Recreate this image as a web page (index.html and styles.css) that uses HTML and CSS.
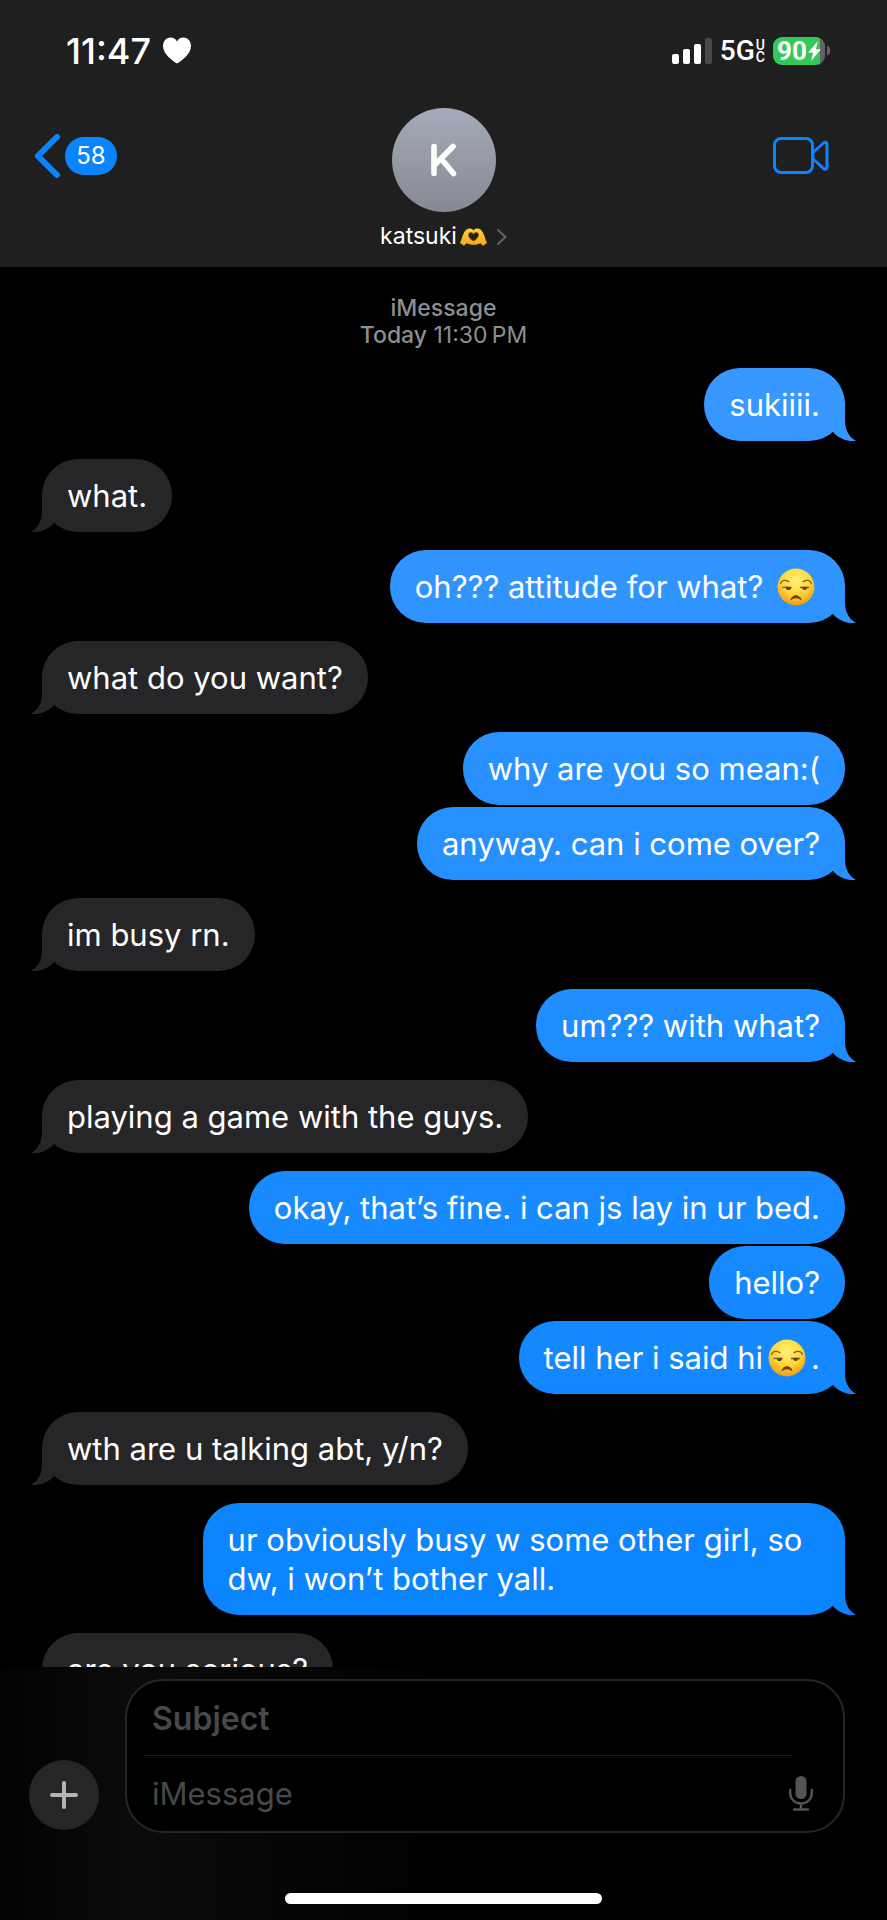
FILE: index.html
```html
<!DOCTYPE html>
<html lang="en">
<head>
<meta charset="utf-8">
<meta name="viewport" content="width=device-width, initial-scale=1">
<title>Messages</title>
<link rel="stylesheet" href="styles.css">
</head>
<body>
<svg class="defs" aria-hidden="true">
  <defs>
    <radialGradient id="face-fill" cx="0.5" cy="0.32" r="0.68">
      <stop offset="0" stop-color="#fff27a"/>
      <stop offset="0.55" stop-color="#ffd83c"/>
      <stop offset="1" stop-color="#f09a14"/>
    </radialGradient>
    <linearGradient id="hand-fill" x1="0" y1="0" x2="0" y2="1">
      <stop offset="0" stop-color="#ffd23c"/>
      <stop offset="1" stop-color="#f5a818"/>
    </linearGradient>
    <symbol id="unamused" viewBox="0 0 38 38">
      <circle cx="19" cy="19" r="18.5" fill="url(#face-fill)"/>
      <g fill="none" stroke="#8a5a14" stroke-width="1.3" stroke-linecap="round">
        <path d="M3.500 15.500c1.500-3.500 5-4 8.500-1.800"/>
        <path d="M26 13.700c3.500-2.200 7-1.700 8.500 1.800"/>
        <path d="M6 19.500c2.500-.6 5-.6 8 0"/>
        <path d="M23.500 19.500c2.500-.6 5-.6 8 0"/>
      </g>
      <path d="M8.500 19.200h5.500c.2 3.600-4.500 4-5.500 0z" fill="#5f380c"/>
      <path d="M25 19.200h5.500c-.5 3.800-5.500 3.600-5.500 0z" fill="#5f380c"/>
      <path d="M14 31.500c1.500-5 8.500-5 10 0-3-2.200-7-2.200-10 0z" fill="#6b3d0a" stroke="#6b3d0a" stroke-linejoin="round"/>
    </symbol>
  </defs>
</svg>

<header class="top">
  <div class="status">
    <div class="status-left">
      <time class="clock">11:47</time>
      <svg class="heart" viewBox="0 0 28 27" aria-label="Focus on" role="img"><path d="M14 26.500C10 24 0 17.500 0 9 0 4 3.500.5 7.500.5c3 0 5.200 1.500 6.500 3.900C15.300 2 17.500.5 20.500.5c4 0 7.500 3.500 7.500 8.500 0 8.500-10 15-14 17.500z" fill="#fff"/></svg>
    </div>
    <div class="status-right">
      <svg class="signal" viewBox="0 0 40 26" aria-label="Signal" role="img">
        <rect x="0" y="16" width="7" height="10" rx="2" fill="#fff"/>
        <rect x="11" y="11" width="7" height="15" rx="2" fill="#fff"/>
        <rect x="22" y="6" width="7" height="20" rx="2" fill="#fff"/>
        <rect x="33" y="0" width="7" height="26" rx="2" fill="#4a4a4a"/>
      </svg>
      <span class="network">5G<span class="network-sub"><span>U</span><span>C</span></span></span>
      <span class="battery">
        <span class="battery-body">90<svg class="bolt" viewBox="0 0 12 20"><path d="M9.500 0 .3 10.800c-.3.400-.2.900.4.900h4L2.500 20l9.200-10.800c.4-.5.200-.9-.4-.9h-4z" fill="#fff"/></svg></span>
        <span class="battery-tip"></span>
      </span>
    </div>
  </div>
  <nav class="bar">
    <button class="back" aria-label="Back, 58 unread">
      <svg class="back-icon" viewBox="0 0 26 44"><path d="M22 3 3 22l19 19" fill="none" stroke="#0a84ff" stroke-width="6" stroke-linecap="round" stroke-linejoin="miter"/></svg>
      <span class="count">58</span>
    </button>
    <button class="contact">
      <span class="avatar"><svg class="initial" viewBox="0 0 26 34" aria-label="K" role="img"><path d="M3 3.500v27M22 3.500 3 22.500M10 15.500l12.500 15" fill="none" stroke="#fff" stroke-width="5.600" stroke-linecap="round"/></svg></span>
      <span class="name">katsuki
        <svg class="hands" viewBox="0 0 27 18" aria-label="heart hands" role="img"><path d="M0 15C2.500 9.500 3 4.500 6.500 1.500 8.500 0 12 0 13.500 2.500 15 0 18.500 0 20.500 1.500c3.500 3 4 8 6.500 13.500l-4 2.800-2.600-2.600c-2 .6-4 1.600-6.900 1.600s-4.900-1-6.900-1.600L4 17.800z" fill="url(#hand-fill)"/><path d="M13.500 13C11 11.500 8.500 10 8.500 6.700c0-2.700 3.800-3.200 5-.4 1.200-2.800 5-2.300 5 .4 0 3.300-2.500 4.800-5 6.300z" fill="#1f1f1f" stroke="#9a5c08" stroke-width="1"/></svg>
        <svg class="disclosure" viewBox="0 0 10 16"><path d="m1 1 7.500 7L1 15" fill="none" stroke="#636366" stroke-width="2" stroke-linecap="round"/></svg>
      </span>
    </button>
    <button class="video" aria-label="FaceTime">
      <svg class="video-icon" viewBox="0 0 56 38"><g fill="none" stroke="#0a84ff" stroke-width="3" stroke-linejoin="round"><rect x="1.500" y="1.500" width="38" height="34" rx="6.500"/><path d="M40 15.500 50.500 6c1.700-1.500 3.500-.8 3.500 1.200v23c0 2-1.800 2.700-3.500 1.200L40 22z"/></g></svg>
    </button>
  </nav>
</header>

<main class="thread">
  <p class="stamp"><strong>iMessage</strong><br><strong>Today</strong> 11:30&#8201;PM</p>
  <p class="msg sent tail">sukiiii.</p>
  <p class="msg got tail">what.</p>
  <p class="msg sent tail">oh??? attitude for what? <svg class="emoji" role="img" aria-label="unamused face"><use href="#unamused"/></svg></p>
  <p class="msg got tail">what do you want?</p>
  <p class="msg sent">why are you so mean:(</p>
  <p class="msg sent tail">anyway. can i come over?</p>
  <p class="msg got tail">im busy rn.</p>
  <p class="msg sent tail">um??? with what?</p>
  <p class="msg got tail">playing a game with the guys.</p>
  <p class="msg sent">okay, that’s fine. i can js lay in ur bed.</p>
  <p class="msg sent">hello?</p>
  <p class="msg sent tail">tell her i said hi<svg class="emoji" role="img" aria-label="unamused face"><use href="#unamused"/></svg>.</p>
  <p class="msg got tail">wth are u talking abt, y/n?</p>
  <p class="msg sent tail">ur obviously busy w some other girl, so dw, i won’t bother yall.</p>
  <p class="msg got tail">are you serious?</p>
</main>

<footer class="composer">
  <div class="compose-row">
    <button class="add" aria-label="Add attachment"><svg class="add-icon" viewBox="0 0 28 28"><path d="M14 2v24M2 14h24" stroke="#b4b4b6" stroke-width="4" stroke-linecap="round"/></svg></button>
    <div class="field">
      <input class="subject" type="text" placeholder="Subject" aria-label="Subject">
      <div class="body-row">
        <input class="body" type="text" placeholder="iMessage" aria-label="iMessage">
        <button class="mic" aria-label="Dictate"><svg class="mic-icon" viewBox="0 0 24 35"><rect x="6.500" y="0" width="11" height="23" rx="5.500" fill="#545456"/><path d="M1.200 14v3c0 6 4.500 10.500 10.800 10.500S22.800 23 22.800 17v-3M12 28v5M5 33.500h14" fill="none" stroke="#545456" stroke-width="2.400" stroke-linecap="round"/></svg></button>
      </div>
    </div>
  </div>
  <div class="home"></div>
</footer>
</body>
</html>
```

FILE: styles.css
```css
* { box-sizing: border-box; }

body {
  margin: 0;
  height: 100vh;
  display: flex;
  flex-direction: column;
  background: #000;
  color: #fff;
  font-family: Inter, "Liberation Sans", sans-serif;
}

button, input {
  font: inherit;
  color: inherit;
  background: none;
  border: 0;
  padding: 0;
}

svg { display: block; flex: none; }
.defs { position: absolute; width: 0; height: 0; }

/* Header */
.top { background: #1f1f1f; height: 267px; flex: none; }

.status {
  display: flex;
  justify-content: space-between;
  align-items: center;
  height: 101px;
  padding: 0 57px 0 66px;
}
.status-left, .status-right, .battery, .network { display: flex; align-items: center; }
.status-left { gap: 12px; }
.clock { font-size: 36px; font-weight: 500; }
.heart { width: 28px; height: 27px; }
.status-right { gap: 8px; }
.signal { width: 40px; height: 26px; }
.network { font-family: Roboto, sans-serif; font-size: 28px; font-weight: 500; gap: 1px; }
.network-sub { display: flex; flex-direction: column; font-size: 14px; line-height: 12px; font-weight: 500; }
.battery { gap: 2px; }
.battery-body {
  display: flex;
  align-items: center;
  gap: 1px;
  width: 52px;
  height: 28px;
  padding-left: 4px;
  border-radius: 9px;
  background: linear-gradient(90deg, #34c759 47px, #636366 47px);
  font: 700 26px Roboto, sans-serif;
}
.bolt { width: 13px; height: 20px; }
.battery-tip { width: 3px; height: 9px; border-radius: 0 3px 3px 0; background: #636366; }

.bar {
  display: grid;
  grid-template-columns: 1fr auto 1fr;
  align-items: start;
  padding: 7px 58px 0 35px;
}
.back { display: flex; align-items: center; gap: 4px; justify-self: start; margin-top: 26px; }
.back-icon { width: 26px; height: 44px; }
.count {
  width: 52px;
  line-height: 38px;
  border-radius: 19px;
  background: #0a84ff;
  font-size: 24px;
  text-align: center;
}
.contact { display: flex; flex-direction: column; align-items: center; gap: 11px; margin-left: 23px; }
.avatar {
  display: grid;
  place-items: center;
  width: 104px;
  height: 104px;
  border-radius: 50%;
  background: linear-gradient(#a5abb9, #858992);
}
.initial { width: 26px; height: 34px; }
.name { display: flex; align-items: center; font-size: 23px; line-height: 27px; }
.hands { width: 27px; height: 18px; margin-left: 3px; }
.disclosure { width: 10px; height: 16px; margin-left: 10px; }
.video { justify-self: end; margin-top: 29px; }
.video-icon { width: 56px; height: 38px; }

/* Thread */
.thread {
  flex: 1;
  min-height: 0;
  overflow: hidden;
  display: flex;
  flex-direction: column;
  padding: 28px 42px 0;
}
.stamp {
  margin: 0 0 19px;
  color: #8e8e93;
  font-size: 23px;
  line-height: 27px;
  text-align: center;
}
.stamp strong { font-weight: 500; }

.msg {
  position: relative;
  flex: none;
  max-width: 80%;
  margin: 0 0 2px;
  padding: 17px 25px;
  border-radius: 36px;
  font-size: 31px;
  line-height: 39px;
}
.sent {
  align-self: flex-end;
  background: linear-gradient(#3b99ff 300px, #0a84ff 1600px) fixed;
}
.got { align-self: flex-start; background: #262628; }
.tail { margin-bottom: 18px; }
.tail::after {
  content: "";
  position: absolute;
  bottom: 0;
  width: 40px;
  height: 40px;
  background: inherit;
}
.sent.tail::after {
  right: -11px;
  clip-path: path("M29 0V19C29 29 33 36 40 40C31 41 22 37 17 31L8 20Z");
}
.got.tail::after {
  left: -11px;
  clip-path: path("M11 0V19C11 29 7 36 0 40C9 41 18 37 23 31L32 20Z");
}
.emoji { display: inline-block; width: 38px; height: 38px; margin: 0 5px; vertical-align: -8px; }

/* Composer */
.composer {
  flex: none;
  padding: 12px 0 16px;
  background: linear-gradient(90deg, #020202, #0b0b0b 15%, #060606 30%, #000 52%);
}
.compose-row { display: flex; align-items: flex-end; gap: 26px; padding: 0 42px 0 29px; }
.add {
  display: grid;
  place-items: center;
  flex: none;
  width: 70px;
  height: 70px;
  margin-bottom: 3px;
  border-radius: 50%;
  background: #262628;
}
.add-icon { width: 28px; height: 28px; }
.field {
  flex: 1;
  min-width: 0;
  border: 2px solid #262628;
  border-radius: 38px;
  background: #000;
  padding: 0 30px 0 16px;
}
.subject, .body { display: block; min-width: 0; font-size: 31px; padding: 0 0 0 9px; outline: 0; }
.subject { width: calc(100% - 21px); height: 75px; border-bottom: 1px solid #1c1c1e; font-size: 32px; font-weight: 600; }
.body-row { display: flex; align-items: center; height: 75px; }
.body { flex: 1; height: 75px; }
.subject::placeholder, .body::placeholder { color: #48484a; opacity: 1; }
.mic-icon { width: 24px; height: 35px; }
.home { width: 317px; height: 11px; margin: 60px auto 0; border-radius: 6px; background: #fff; }
```
